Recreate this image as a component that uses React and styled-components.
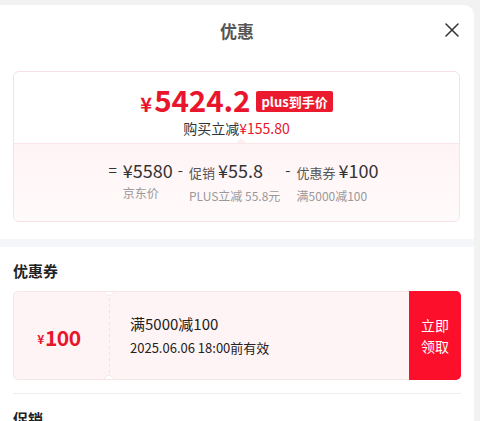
import React from 'react';
import styled, { createGlobalStyle } from 'styled-components';

const GlobalStyle = createGlobalStyle`
    body {
        margin: 0;
        background: #f2f2f2;
        font-family: "Noto Sans CJK SC", "Noto Sans", sans-serif;
        color: #222;
    }
`;

function CloseIcon() {
    return (
        <svg width="16" height="16" viewBox="0 0 16 16">
            <path d="M2 2 L14 14 M14 2 L2 14" stroke="#333" strokeWidth="1.5" fill="none" strokeLinecap="round" />
        </svg>
    );
}

function Breakdown({ op, label, value, note }) {
    return (
        <StItem>
            <StOp>{op}</StOp>
            <StItemBody>
                <StItemTop>
                    {label && <StItemLabel>{label}</StItemLabel>}
                    <StItemValue>{value}</StItemValue>
                </StItemTop>
                <StItemNote>{note}</StItemNote>
            </StItemBody>
        </StItem>
    );
}

export default function App() {
    return (
        <>
            <GlobalStyle />
            <StPanel>
                <StHeader>
                    <StTitle>优惠</StTitle>
                    <StClose>
                        <CloseIcon />
                    </StClose>
                </StHeader>

                <StPriceCard>
                    <StPriceTop>
                        <StPriceRow>
                            <StYen>¥</StYen>
                            <StBigPrice>5424.2</StBigPrice>
                            <StTag>plus到手价</StTag>
                        </StPriceRow>
                        <StSave>
                            购买立减<em>¥155.80</em>
                        </StSave>
                    </StPriceTop>
                    <StPriceBottom>
                        <Breakdown op="=" value="¥5580" note="京东价" />
                        <Breakdown op="-" label="促销" value="¥55.8" note="PLUS立减 55.8元" />
                        <Breakdown op="-" label="优惠券" value="¥100" note="满5000减100" />
                    </StPriceBottom>
                </StPriceCard>

                <StBand />

                <StSection>
                    <StSectionTitle>优惠券</StSectionTitle>
                    <StCoupon>
                        <StCouponAmount>
                            <small>¥</small>100
                        </StCouponAmount>
                        <StCouponCut />
                        <StCouponInfo>
                            <StCouponName>满5000减100</StCouponName>
                            <StCouponDate>2025.06.06 18:00前有效</StCouponDate>
                        </StCouponInfo>
                        <StCouponBtn>
                            立即
                            <br />
                            领取
                        </StCouponBtn>
                    </StCoupon>
                    <StDivider />
                    <StSectionTitle>促销</StSectionTitle>
                </StSection>
            </StPanel>
        </>
    );
}

const StPanel = styled.div`
    margin-top: 5px;
    width: 474px;
    height: 416px;
    overflow: hidden;
    background: #fff;
    border-top-right-radius: 10px;
`;

const StHeader = styled.div`
    position: relative;
    display: flex;
    align-items: center;
    justify-content: center;
    height: 50px;
`;

const StTitle = styled.div`
    font-size: 17px;
    font-weight: 700;
    color: #555;
`;

const StClose = styled.div`
    position: absolute;
    right: 14px;
    top: 17px;
    display: flex;
`;

const StPriceCard = styled.div`
    margin: 16px 14px 0 13px;
    border: 1px solid #f6e1e4;
    border-radius: 6px;
    overflow: hidden;
`;

const StPriceTop = styled.div`
    position: relative;
    padding: 10px 0 5px;
    display: flex;
    flex-direction: column;
    align-items: center;
    border-bottom: 1px solid #fbe5e8;
    &::after {
        content: '';
        position: absolute;
        left: 222px;
        bottom: 0;
        border: 5px solid transparent;
        border-bottom-color: #fdeef0;
    }
`;

const StPriceRow = styled.div`
    display: flex;
    align-items: baseline;
    height: 36px;
    line-height: 36px;
    color: #e8152d;
    font-weight: 700;
`;

const StYen = styled.span`
    font-size: 20px;
    margin-right: 2px;
`;

const StBigPrice = styled.span`
    font-size: 29.6px;
    letter-spacing: -0.1px;
`;

const StTag = styled.span`
    align-self: center;
    margin-left: 6px;
    margin-top: 3px;
    padding: 0 5px;
    height: 21px;
    line-height: 21px;
    font-size: 13px;
    font-weight: 700;
    color: #fff;
    background: #ec1a2e;
    border-radius: 2px;
`;

const StSave = styled.div`
    font-size: 14px;
    line-height: 20px;
    color: #333;
    em {
        font-style: normal;
        color: #e8152d;
    }
`;

const StPriceBottom = styled.div`
    display: flex;
    justify-content: center;
    gap: 5px;
    padding: 13px 0 16px 14px;
    background: linear-gradient(180deg, #fff4f5 0%, #fffafb 100%);
`;

const StItem = styled.div`
    display: flex;
    align-items: flex-start;
    gap: 6px;
`;

const StOp = styled.span`
    font-size: 15px;
    line-height: 26px;
    color: #333;
`;

const StItemBody = styled.div`
    display: flex;
    flex-direction: column;
`;

const StItemTop = styled.div`
    display: flex;
    align-items: baseline;
    gap: 3px;
    line-height: 26px;
`;

const StItemLabel = styled.span`
    font-size: 13px;
    color: #555;
`;

const StItemValue = styled.span`
    font-size: 18px;
    color: #333;
`;

const StItemNote = styled.span`
    margin-top: 1px;
    font-size: 12px;
    line-height: 18px;
    color: #999;
    white-space: nowrap;
`;

const StBand = styled.div`
    margin-top: 17px;
    height: 8px;
    background: #f5f6fa;
`;

const StSection = styled.div`
    padding: 13px 13px 0;
`;

const StSectionTitle = styled.div`
    font-size: 15px;
    font-weight: 700;
    line-height: 22px;
    color: #222;
`;

const StCoupon = styled.div`
    display: flex;
    margin-top: 9px;
    height: 89px;
    width: 448px;
`;

const StCouponAmount = styled.div`
    display: flex;
    align-items: center;
    justify-content: center;
    width: 90px;
    padding-top: 2px;
    font-size: 21px;
    font-weight: 700;
    letter-spacing: -0.5px;
    color: #e8152d;
    background: #fff4f5;
    border: 1px solid #f8e5e8;
    border-right: 0;
    border-radius: 5px 0 0 5px;
    small {
        font-size: 12px;
        margin-top: 4px;
        margin-right: 1px;
    }
`;

const StCouponCut = styled.div`
    position: relative;
    width: 10px;
    overflow: hidden;
    background:
        repeating-linear-gradient(to bottom, #f6dfe3 0 3px, transparent 3px 6px) center / 1px 100% no-repeat,
        #fff4f5;
    border-top: 1px solid #f8e5e8;
    border-bottom: 1px solid #f8e5e8;
    &::before,
    &::after {
        content: '';
        position: absolute;
        left: 0;
        width: 8px;
        height: 8px;
        border-radius: 50%;
        background: #fff;
        border: 1px solid #f8e5e8;
    }
    &::before {
        top: -6px;
    }
    &::after {
        bottom: -6px;
    }
`;

const StCouponInfo = styled.div`
    flex: 1;
    display: flex;
    flex-direction: column;
    justify-content: center;
    padding-left: 16px;
    background: #fff4f5;
    border-top: 1px solid #f8e5e8;
    border-bottom: 1px solid #f8e5e8;
`;

const StCouponName = styled.div`
    font-size: 15px;
    line-height: 22px;
    color: #222;
`;

const StCouponDate = styled.div`
    margin-top: 3px;
    font-size: 13px;
    line-height: 20px;
    color: #222;
`;

const StCouponBtn = styled.div`
    display: flex;
    align-items: center;
    justify-content: center;
    width: 52px;
    font-size: 14px;
    line-height: 21px;
    color: #fff;
    text-align: center;
    background: #fc0f2a;
    border-radius: 0 5px 5px 0;
`;

const StDivider = styled.div`
    margin: 13px 0 14px;
    width: 448px;
    height: 1px;
    background: #eeeeee;
`;
